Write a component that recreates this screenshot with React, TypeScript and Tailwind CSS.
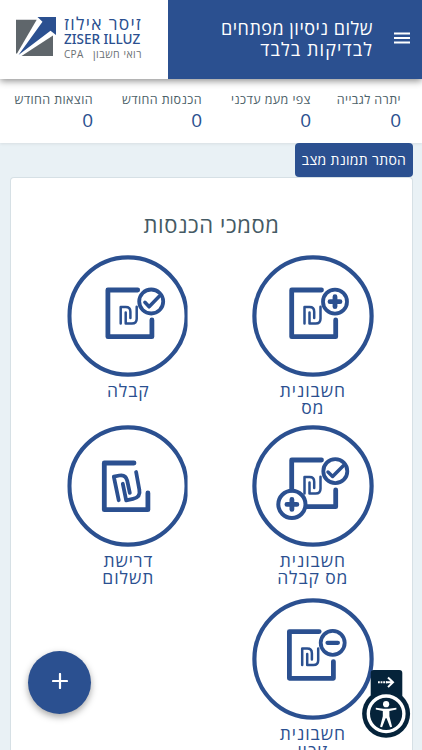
import type { ReactNode } from "react";

const stats = [
  { label: "יתרה לגבייה", value: 0, width: "w-[90px]" },
  { label: "צפי מעמ עדכני", value: 0, width: "w-[109px]" },
  { label: "הכנסות החודש", value: 0, width: "w-[109px]" },
  { label: "הוצאות החודש", value: 0, width: "w-[80px]" },
];

function Shekel() {
  return (
    <g strokeWidth={2.5}>
      <path d="M52.5 68.5V52h5q4.7 0 4.7 4.7V63" />
      <path d="M57.5 57.5v11h6.2q4.8 0 4.8-4.8V51.8" />
    </g>
  );
}

function CircleIcon({ children, className = "" }: { children: ReactNode; className?: string }) {
  return (
    <svg
      viewBox="0 0 122 122"
      className={`h-[122px] w-[122px] shrink-0 ${className}`}
      fill="none"
      stroke="#2b5090"
      strokeWidth={4.8}
      strokeLinecap="round"
      strokeLinejoin="round"
    >
      <circle cx="61" cy="61" r="58.6" strokeWidth={4.2} />
      {children}
    </svg>
  );
}

function InvoiceIcon() {
  return (
    <CircleIcon>
      <path d="M69.5 35H39.7v46.7h44V65" />
      <Shekel />
      <circle cx="83" cy="46.7" r="12" strokeWidth={3.8} />
      <path d="M83 41.7v10M78 46.7h10" />
    </CircleIcon>
  );
}

function ReceiptIcon() {
  return (
    <CircleIcon className="[clip-path:inset(0_1.7px_0_0)]">
      <g transform="translate(1.2 0)">
        <path d="M69.5 35H39.7v46.7h44V65" />
        <Shekel />
        <circle cx="83" cy="46.5" r="12" strokeWidth={3.8} />
        <path d="M76.7 47.3l4.2 4.5L91.3 41" strokeWidth={3.5} />
      </g>
    </CircleIcon>
  );
}

function InvoiceReceiptIcon() {
  return (
    <CircleIcon>
      <path d="M69.5 35H39.7v30M55 81.7h28.7V65" />
      <Shekel />
      <circle cx="83.3" cy="46.2" r="12" strokeWidth={3.8} />
      <path d="M76 47l4.6 4.5L91.3 40.7" strokeWidth={3.5} />
      <circle cx="39.9" cy="79.4" r="13.6" strokeWidth={4} />
      <path d="M39.9 74.4v10M34.9 79.4h10" />
    </CircleIcon>
  );
}

function PaymentRequestIcon() {
  return (
    <CircleIcon className="[clip-path:inset(0_1.7px_0_0)]">
      <g transform="translate(0.5 0)">
        <path d="M66.5 38H36.8v46.7h43.6V68" />
        <g strokeWidth={3.8}>
          <path d="M51.2 75.2L46.3 51.6l5.5-1.1q6.5-1.2 7.9 5.2l2.6 12.1" />
          <path d="M55.3 58.8l3.4 16.5 6.8-1.4q7.9-1.7 6.3-9.4L68.6 47" />
        </g>
      </g>
    </CircleIcon>
  );
}

function CreditIcon() {
  return (
    <CircleIcon>
      <g transform="translate(-2.3 -1.4)">
        <path d="M69.5 35H39.7v46.7h44V65" />
        <Shekel />
        <circle cx="83" cy="46.2" r="12" strokeWidth={3.8} />
        <path d="M77.8 46.2h10.4" strokeWidth={4.2} />
      </g>
    </CircleIcon>
  );
}

function Tile({ icon, label }: { icon: ReactNode; label: string }) {
  return (
    <div className="flex flex-col items-center">
      {icon}
      <p className="mt-[5px] text-center text-[17.5px] leading-[17px] font-medium tracking-[0.9px] whitespace-pre-line text-[#2b5090]">
        {label}
      </p>
    </div>
  );
}

function Logo() {
  return (
    <div dir="ltr" className="flex h-full w-[168px] items-start bg-white pt-[16px] pl-[16px]">
      <svg viewBox="0 0 40 40" className="mt-px h-[40px] w-[40px]">
        <path d="M0 2.7h20.7L1 36.5H0z" fill="#5f666b" />
        <path d="M37 18.5V39H5.5z" fill="#5f666b" />
        <path d="M21.5 0H40v18l-5.5-4.3L2.5 38 26.5 4.8z" fill="#2b5090" />
      </svg>
      <div className="ml-[8px] flex w-[78px] flex-col whitespace-nowrap text-[#2b5090]">
        <span dir="rtl" className="text-[17.5px] leading-[15px] font-medium tracking-[1.3px]">
          זיסר אילוז
        </span>
        <span className="font-['Noto_Sans','Open_Sans',sans-serif] text-[13.5px] leading-[17px] font-medium">
          ZISER ILLUZ
        </span>
        <span className="flex justify-between text-[10px] leading-[12px] text-[#6b7074]">
          <span className="tracking-[0.3px]">CPA</span>
          <span dir="rtl" className="text-[10.5px] tracking-[0.5px]">
            רואי חשבון
          </span>
        </span>
      </div>
    </div>
  );
}

function AccessibilityButton() {
  return (
    <svg viewBox="0 0 50 80" className="absolute top-[669px] left-[361px] h-[80px] w-[50px]">
      <rect x="9.7" y="1" width="31.6" height="40" rx="3" fill="#05233a" />
      <circle cx="25.1" cy="44.8" r="24" fill="#05233a" />
      <circle cx="25.1" cy="44.8" r="17.8" fill="none" stroke="#fff" strokeWidth="3.4" />
      <g stroke="#fff" fill="none" strokeWidth="2">
        <path d="M17 13.3h9" strokeDasharray="1.8 0.8" />
        <path d="M25 13.3h7M27 8.5l5 4.8-5 4.8" />
      </g>
      <circle cx="25.1" cy="35.2" r="3.1" fill="#fff" />
      <path
        d="M14.8 38.8l7.7 1h5.2l7.7-1v1.8l-7 1.4v5.2l2.7 10.6-2 .4-3.5-8.9h-1l-3.5 8.9-2-.4 2.7-10.6V42l-7-1.4z"
        fill="#fff"
      />
    </svg>
  );
}

export default function App() {
  return (
    <div
      dir="rtl"
      className="relative flex h-[750px] w-[422px] flex-col overflow-hidden bg-[#e9f1f5] font-['Open_Sans','Noto_Sans',sans-serif]"
    >
      <header className="relative z-10 flex h-[79px] shrink-0 bg-[#2b5090] text-white shadow-[0_2px_7px_rgba(0,0,0,0.45)]">
        <div className="flex flex-1 items-start pt-[18px] pr-[12px]">
          <svg viewBox="0 0 16 12" className="mt-[14px] h-[12px] w-[16px]" fill="#fff">
            <path d="M0 .5h16v2H0zM0 5h16v2H0zM0 9.5h16v2H0z" />
          </svg>
          <h1 className="mr-[21px] text-[18px] leading-[20.5px] tracking-[0.5px] whitespace-nowrap">
            שלום ניסיון מפתחים
            <br />
            <span className="tracking-[1.1px]">לבדיקות בלבד</span>
          </h1>
        </div>
        <Logo />
      </header>

      <section className="flex h-[64px] shrink-0 bg-white pt-[12px] pr-[21px] shadow-[0_1px_3px_rgba(0,0,0,0.08)]">
        {stats.map((stat) => (
          <div key={stat.label} className={`${stat.width} whitespace-nowrap`}>
            <div className="text-[12.5px] leading-[17px] tracking-[0.4px] text-[#4c6169]">{stat.label}</div>
            <div className="text-[19px] leading-[24px] text-[#2b5090]">{stat.value}</div>
          </div>
        ))}
      </section>

      <button className="relative mr-[9px] flex h-[34px] w-[118px] shrink-0 items-center justify-center self-start rounded-[4px] bg-[#2b5090] pb-px text-[14px] tracking-[0.3px] whitespace-nowrap text-white">
        הסתר תמונת מצב
      </button>

      <main className="mr-[9px] ml-[10px] flex-1 rounded-t-[4px] border border-b-0 border-[#d6e0e5] bg-white">
        <h2 className="mt-[31px] text-center text-[22px] leading-[30px] tracking-[0.6px] text-[#455a64]">
          מסמכי הכנסות
        </h2>
        <div className="mt-[16px] mr-[7px] grid w-[369px] grid-cols-2 grid-rows-[170px_173px_170px]">
          <Tile icon={<InvoiceIcon />} label={"חשבונית\nמס"} />
          <Tile icon={<ReceiptIcon />} label="קבלה" />
          <Tile icon={<InvoiceReceiptIcon />} label={"חשבונית\nמס קבלה"} />
          <Tile icon={<PaymentRequestIcon />} label={"דרישת\nתשלום"} />
          <Tile icon={<CreditIcon />} label={"חשבונית\nזיכוי"} />
        </div>
      </main>

      <button className="absolute top-[651px] left-[28px] flex h-[63px] w-[63px] items-center justify-center rounded-full bg-[#2b5090] shadow-[0_3px_7px_rgba(0,0,0,0.35)]">
        <svg viewBox="0 0 16 16" className="mb-[4px] h-[16px] w-[16px]" stroke="#fff" strokeWidth={2.2}>
          <path d="M8 1v14M1 8h14" strokeLinecap="round" />
        </svg>
      </button>
      <AccessibilityButton />
    </div>
  );
}
